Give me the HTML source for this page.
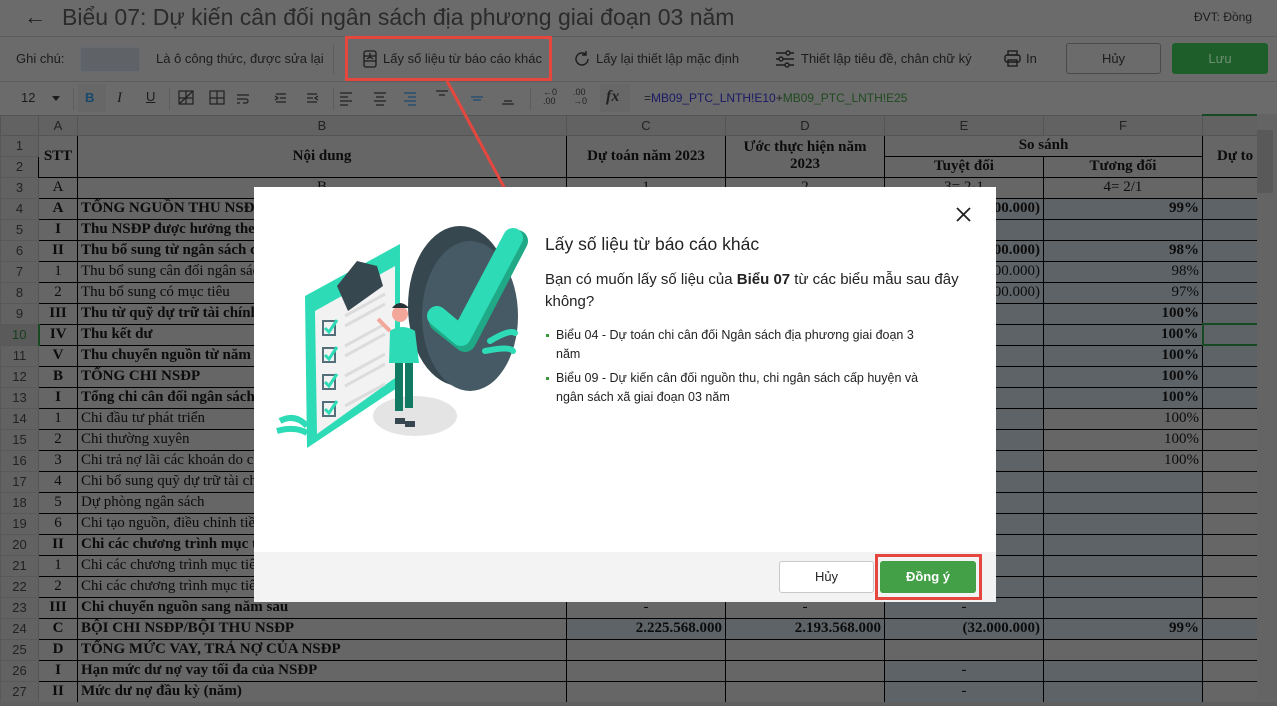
<!DOCTYPE html>
<html><head><meta charset="utf-8">
<style>
*{margin:0;padding:0;box-sizing:border-box}
body{width:1277px;height:706px;overflow:hidden;background:#6b6b6b;font-family:"Liberation Sans",sans-serif;position:relative;color:#111}
.abs{position:absolute}
.tb{font-size:13px;color:#1c1c1c;white-space:nowrap}
table{position:absolute;left:0;top:114px;border-collapse:collapse;table-layout:fixed;font-family:"Liberation Serif",serif;font-size:15px;color:#0c0c0c}
td{border:1px solid #000;height:21px;padding:0 3px;white-space:nowrap;overflow:hidden;background:#666;line-height:19px}
td.rn{background:#626262;color:#222;font-family:"Liberation Sans",sans-serif;font-size:13px;text-align:center;border-color:#595959;border-right:1px solid #555}
tr.ch td{background:#626262;color:#222;font-family:"Liberation Sans",sans-serif;font-size:13px;text-align:center;height:20px;border-color:#555}
td.c{text-align:center}td.r{text-align:right}
.b{font-weight:bold}
td.s{background:#5e6367}
</style></head><body>
<div class="abs" style="left:24px;top:4px;font-size:22px;color:#222">←</div>
<div class="abs" style="left:62px;top:4px;font-size:23px;color:#2b2b2b">Biểu 07: Dự kiến cân đối ngân sách địa phương giai đoạn 03 năm</div>
<div class="abs tb" style="left:1194px;top:10px;font-size:12px">ĐVT: Đồng</div>
<div class="abs" style="left:0;top:36px;width:1277px;height:1px;background:#5d5d5d"></div>
<div class="abs tb" style="left:16px;top:51px">Ghi chú:</div>
<div class="abs" style="left:80px;top:47px;width:60px;height:25px;background:#5f6368;border:1px solid #646a6f"></div>
<div class="abs tb" style="left:156px;top:51px">Là ô công thức, được sửa lại</div>
<div class="abs" style="left:333px;top:44px;width:1px;height:30px;background:#5d5d5d"></div>
<svg class="abs" style="left:362px;top:50px" width="16" height="18" viewBox="0 0 16 18" fill="none" stroke="#1c1c1c" stroke-width="1.3"><rect x="2" y="1" width="12" height="16" rx="2"/><path d="M2 6h12M2 11h12M8 3v3M5 9l3 -2 3 2"/></svg>
<div class="abs tb" style="left:383px;top:51px">Lấy số liệu từ báo cáo khác</div>
<svg class="abs" style="left:573px;top:50px" width="18" height="18" viewBox="0 0 18 18" fill="none" stroke="#1c1c1c" stroke-width="1.4"><path d="M15 9a6 6 0 1 1-2-4.5"/><path d="M13 1v4h-4"/></svg>
<div class="abs tb" style="left:596px;top:51px">Lấy lại thiết lập mặc định</div>
<svg class="abs" style="left:775px;top:50px" width="20" height="18" viewBox="0 0 20 18" fill="none" stroke="#1c1c1c" stroke-width="1.4"><path d="M1 3h18M1 9h18M1 15h18"/><circle cx="13" cy="3" r="2" fill="#6b6b6b"/><circle cx="6" cy="9" r="2" fill="#6b6b6b"/><circle cx="12" cy="15" r="2" fill="#6b6b6b"/></svg>
<div class="abs tb" style="left:801px;top:51px">Thiết lập tiêu đề, chân chữ ký</div>
<svg class="abs" style="left:1004px;top:50px" width="17" height="17" viewBox="0 0 17 17" fill="none" stroke="#1c1c1c" stroke-width="1.4"><rect x="4" y="1" width="9" height="4"/><rect x="1" y="5" width="15" height="7" rx="2"/><rect x="4" y="10" width="9" height="6"/></svg>
<div class="abs tb" style="left:1026px;top:51px">In</div>
<div class="abs" style="left:1066px;top:43px;width:95px;height:31px;border:1px solid #4a4a4a;border-radius:3px;background:#6b6b6b;font-size:13px;color:#1c1c1c;text-align:center;line-height:29px">Hủy</div>
<div class="abs" style="left:1172px;top:43px;width:96px;height:31px;border-radius:3px;background:#1e5e2a;font-size:13px;color:#6e8f73;text-align:center;line-height:31px">Lưu</div>
<div class="abs" style="left:0;top:81px;width:1277px;height:1px;background:#5d5d5d"></div>
<div class="abs tb" style="left:21px;top:90px">12</div>
<div class="abs" style="left:52px;top:96px;border-left:4px solid transparent;border-right:4px solid transparent;border-top:5px solid #1c1c1c"></div>
<div class="abs" style="left:73px;top:88px;width:1px;height:22px;background:#5d5d5d"></div>
<div class="abs" style="left:78px;top:84px;width:28px;height:28px;background:#676767"></div>
<div class="abs tb b" style="left:85px;top:90px;color:#17486e">B</div>
<div class="abs tb" style="left:117px;top:90px;font-style:italic;font-family:'Liberation Serif',serif;font-size:15px">I</div>
<div class="abs tb" style="left:146px;top:89px;text-decoration:underline">U</div>
<div class="abs" style="left:169px;top:88px;width:1px;height:22px;background:#5d5d5d"></div>
<svg class="abs" style="left:177px;top:88px" width="160" height="20" viewBox="0 0 160 20" fill="none" stroke="#222" stroke-width="1.2"><rect x="2" y="3" width="14" height="13"/><path d="M2 16L16 3M2 10h14M9 3v13"/><rect x="33" y="3" width="14" height="13"/><path d="M33 10h14M40 3v13"/><path d="M60 7h12M60 11h9a2 2 0 0 1 0 4h-3M60 15h3"/><path d="M99 6h10M103 10h6M99 14h10M98 8l3 2-3 2"/><path d="M130 6h10M130 10h6M130 14h10M141 8l-3 2 3 2"/></svg>
<div class="abs" style="left:333px;top:88px;width:1px;height:22px;background:#5d5d5d"></div>
<svg class="abs" style="left:338px;top:88px" width="190" height="20" viewBox="0 0 190 20" fill="none" stroke="#222" stroke-width="1.2"><path d="M2 5h12M2 9h8M2 13h12M2 17h8"/><path d="M36 5h12M38 9h8M36 13h12M38 17h8"/><path d="M66 5h12M70 9h8M66 13h12M70 17h8" stroke="#1c4a70"/><path d="M98 3h12M101 7h6"/><path d="M133 9h12M135 12h8" stroke="#1c4a70"/><path d="M164 16h12M166 13h8"/></svg>
<div class="abs" style="left:530px;top:88px;width:1px;height:22px;background:#5d5d5d"></div>
<div class="abs" style="left:543px;top:88px;font-size:9px;line-height:9px;color:#222">←0<br>.00</div>
<div class="abs" style="left:573px;top:88px;font-size:9px;line-height:9px;color:#222">.00<br>→0</div>
<div class="abs" style="left:600px;top:84px;width:30px;height:28px;background:#676767"></div>
<div class="abs" style="left:606px;top:88px;font-family:'Liberation Serif',serif;font-style:italic;font-weight:bold;font-size:16px;color:#222">fx</div>
<div class="abs" style="left:644px;top:91px;font-size:12px;color:#222">=<span style="color:#1a1a66">MB09_PTC_LNTH!E10</span>+<span style="color:#1f4a1f">MB09_PTC_LNTH!E25</span></div>
<table>
<colgroup><col style="width:38px"><col style="width:39px"><col style="width:489px"><col style="width:159px"><col style="width:159px"><col style="width:159px"><col style="width:159px"><col style="width:55px"></colgroup>
<tr class="ch"><td></td><td>A</td><td>B</td><td>C</td><td>D</td><td>E</td><td>F</td><td style="border-top:2px solid #174a22"></td></tr>
<tr><td class="rn">1</td><td class="c b" rowspan="2">STT</td><td class="c b" rowspan="2">Nội dung</td><td class="c b" rowspan="2">Dự toán năm 2023</td><td class="c b" rowspan="2" style="line-height:17px">Ước thực hiện năm<br>2023</td><td class="c b" colspan="2">So sánh</td><td class="b" rowspan="2" style="padding-left:14px">Dự to</td></tr>
<tr><td class="rn">2</td><td class="c b">Tuyệt đối</td><td class="c b">Tương đối</td></tr>
<tr><td class="rn">3</td><td class="c">A</td><td class="c">B</td><td class="c">1</td><td class="c">2</td><td class="c">3= 2-1</td><td class="c">4= 2/1</td><td></td></tr>
<tr><td class="rn">4</td><td class="c b">A</td><td class="b">TỔNG NGUỒN THU NSĐP</td><td class="s"></td><td class="s"></td><td class="r b s">(32.000.000)</td><td class="r b s">99%</td><td class="s"></td></tr>
<tr><td class="rn">5</td><td class="c b">I</td><td class="b">Thu NSĐP được hưởng theo phân cấp</td><td></td><td></td><td class="c s">-</td><td class="s"></td><td class="s"></td></tr>
<tr><td class="rn">6</td><td class="c b">II</td><td class="b">Thu bổ sung từ ngân sách cấp trên</td><td class="s"></td><td class="s"></td><td class="r b s">(32.000.000)</td><td class="r b s">98%</td><td class="s"></td></tr>
<tr><td class="rn">7</td><td class="c">1</td><td>Thu bổ sung cân đối ngân sách</td><td></td><td></td><td class="r s">(32.000.000)</td><td class="r s">98%</td><td class="s"></td></tr>
<tr><td class="rn">8</td><td class="c">2</td><td>Thu bổ sung có mục tiêu</td><td></td><td></td><td class="r s">(32.000.000)</td><td class="r s">97%</td><td class="s"></td></tr>
<tr><td class="rn">9</td><td class="c b">III</td><td class="b">Thu từ quỹ dự trữ tài chính</td><td></td><td></td><td class="c s">-</td><td class="r b s">100%</td><td class="s"></td></tr>
<tr><td class="rn" style="background:#5a5a5a;color:#17401f;border-right:2px solid #174a22">10</td><td class="c b">IV</td><td class="b">Thu kết dư</td><td></td><td></td><td class="c s">-</td><td class="r b s">100%</td><td class="s" style="border:2px solid #174a22"></td></tr>
<tr><td class="rn">11</td><td class="c b">V</td><td class="b">Thu chuyển nguồn từ năm trước chuyển sang</td><td></td><td></td><td class="c s">-</td><td class="r b s">100%</td><td class="s"></td></tr>
<tr><td class="rn">12</td><td class="c b">B</td><td class="b">TỔNG CHI NSĐP</td><td></td><td></td><td class="c s">-</td><td class="r b s">100%</td><td class="s"></td></tr>
<tr><td class="rn">13</td><td class="c b">I</td><td class="b">Tổng chi cân đối ngân sách</td><td></td><td></td><td class="c s">-</td><td class="r b s">100%</td><td class="s"></td></tr>
<tr><td class="rn">14</td><td class="c">1</td><td>Chi đầu tư phát triển</td><td></td><td></td><td class="c s">-</td><td class="r">100%</td><td></td></tr>
<tr><td class="rn">15</td><td class="c">2</td><td>Chi thường xuyên</td><td></td><td></td><td class="c s">-</td><td class="r">100%</td><td></td></tr>
<tr><td class="rn">16</td><td class="c">3</td><td>Chi trả nợ lãi các khoản do chính quyền địa phương vay</td><td></td><td></td><td class="c s">-</td><td class="r">100%</td><td></td></tr>
<tr><td class="rn">17</td><td class="c">4</td><td>Chi bổ sung quỹ dự trữ tài chính</td><td></td><td></td><td class="c s">-</td><td class="s"></td><td></td></tr>
<tr><td class="rn">18</td><td class="c">5</td><td>Dự phòng ngân sách</td><td></td><td></td><td class="c s">-</td><td class="s"></td><td></td></tr>
<tr><td class="rn">19</td><td class="c">6</td><td>Chi tạo nguồn, điều chỉnh tiền lương</td><td></td><td></td><td class="c s">-</td><td class="s"></td><td></td></tr>
<tr><td class="rn">20</td><td class="c b">II</td><td class="b">Chi các chương trình mục tiêu</td><td></td><td></td><td class="c s">-</td><td class="s"></td><td></td></tr>
<tr><td class="rn">21</td><td class="c">1</td><td>Chi các chương trình mục tiêu quốc gia</td><td></td><td></td><td class="c s">-</td><td class="s"></td><td></td></tr>
<tr><td class="rn">22</td><td class="c">2</td><td>Chi các chương trình mục tiêu, nhiệm vụ</td><td></td><td></td><td class="c s">-</td><td class="s"></td><td></td></tr>
<tr><td class="rn">23</td><td class="c b">III</td><td class="b">Chi chuyển nguồn sang năm sau</td><td class="c">-</td><td class="c">-</td><td class="c s">-</td><td class="s"></td><td></td></tr>
<tr><td class="rn">24</td><td class="c b">C</td><td class="b">BỘI CHI NSĐP/BỘI THU NSĐP</td><td class="r b s">2.225.568.000</td><td class="r b s">2.193.568.000</td><td class="r b s">(32.000.000)</td><td class="r b s">99%</td><td class="s"></td></tr>
<tr><td class="rn">25</td><td class="c b">D</td><td class="b">TỔNG MỨC VAY, TRẢ NỢ CỦA NSĐP</td><td></td><td></td><td></td><td></td><td></td></tr>
<tr><td class="rn">26</td><td class="c b">I</td><td class="b">Hạn mức dư nợ vay tối đa của NSĐP</td><td></td><td></td><td class="c s">-</td><td class="s"></td><td></td></tr>
<tr><td class="rn">27</td><td class="c b">II</td><td class="b">Mức dư nợ đầu kỳ (năm)</td><td></td><td></td><td class="c s">-</td><td class="s"></td><td></td></tr>
</table>
<div class="abs" style="left:1257px;top:114px;width:20px;height:592px;background:#646464"></div>
<div class="abs" style="left:1257px;top:130px;width:16px;height:63px;background:#595959"></div>
<div class="abs" style="left:0;top:702px;width:1277px;height:4px;background:#5f5f5f"></div>
<div class="abs" style="left:345px;top:36px;width:207px;height:45px;border:3px solid #e5473f"></div>
<svg class="abs" style="left:0;top:0" width="1277" height="706"><path d="M447 81L512 202" stroke="#e5473f" stroke-width="3"/><path d="M503 199L517 212 517 193" fill="none" stroke="#e5473f" stroke-width="3"/></svg>
<div class="abs" style="left:254px;top:187px;width:742px;height:415px;background:#fff"></div>
<div class="abs" style="left:254px;top:552px;width:742px;height:50px;background:#f3f3f3"></div>
<svg class="abs" style="left:255px;top:186px" width="290" height="270" viewBox="0 0 290 270">
<ellipse cx="160" cy="230" rx="42" ry="20" fill="#e4e4e4"/>
<ellipse cx="205" cy="120" rx="52" ry="80" fill="#37474f"/>
<ellipse cx="215" cy="130" rx="48" ry="75" fill="#455a64"/>
<path d="M262 55L210 155 185 135" fill="none" stroke="#1fa987" stroke-width="22" stroke-linecap="round" stroke-linejoin="round"/>
<path d="M258 52L206 150 182 130" fill="none" stroke="#2ddbb6" stroke-width="20" stroke-linecap="round" stroke-linejoin="round"/>
<path d="M235 155q20-12 25-8M230 165q25-5 28 0" stroke="#2ddbb6" stroke-width="6" fill="none" stroke-linecap="round"/>
<path d="M50 110L145 58 145 200 52 262Z" fill="#2ddbb6"/>
<path d="M60 125L140 80 140 192 62 248Z" fill="#f2f2f2"/>
<path d="M82 100l20-25 20 5 6 20-35 25Z" fill="#37474f"/>
<g stroke="#dcdcdc" stroke-width="3"><path d="M90 130l40-22M90 140l40-22M90 160l40-22M90 170l40-22M90 190l40-22M90 200l40-22M90 220l40-22"/></g>
<g fill="none" stroke="#546e7a" stroke-width="2"><rect x="68" y="135" width="12" height="14"/><rect x="68" y="162" width="12" height="14"/><rect x="68" y="189" width="12" height="14"/><rect x="68" y="216" width="12" height="14"/></g>
<g fill="none" stroke="#2ddbb6" stroke-width="3"><path d="M70 142l4 4 8-12M70 169l4 4 8-12M70 196l4 4 8-12M70 223l4 4 8-12"/></g>
<path d="M25 235q15-8 27 5M22 245q18-5 30 2" stroke="#2ddbb6" stroke-width="6" fill="none"/>
<path d="M140 170v55h8v-55zM150 170v52h8v-52z" fill="#127a62"/>
<path d="M135 145q12-8 25 0l4 32h-30z" fill="#2ddbb6"/>
<circle cx="145" cy="128" r="8" fill="#f2a79a"/>
<path d="M137 122q8-10 17 0" fill="#263238"/>
<path d="M135 145l-12-12" stroke="#f2a79a" stroke-width="4"/>
<path d="M140 232h10v6h-10zM150 235h10v6h-10z" fill="#37474f"/>
</svg>
<div class="abs" style="left:545px;top:234px;font-size:17.5px;color:#222">Lấy số liệu từ báo cáo khác</div>
<div class="abs" style="left:545px;top:269px;width:420px;font-size:15px;line-height:22px;color:#222">Bạn có muốn lấy số liệu của <b>Biểu 07</b> từ các biểu mẫu sau đây không?</div>
<div class="abs" style="left:546px;top:326px;width:385px;font-size:12.5px;line-height:19px;color:#222;padding-left:10px"><span class="abs" style="left:0;top:8px;width:3px;height:3px;background:#3a9a3a"></span>Biểu 04 - Dự toán chi cân đối Ngân sách địa phương giai đoạn 3 năm</div>
<div class="abs" style="left:546px;top:369px;width:385px;font-size:12.5px;line-height:19px;color:#222;padding-left:10px"><span class="abs" style="left:0;top:8px;width:3px;height:3px;background:#3a9a3a"></span>Biểu 09 - Dự kiến cân đối nguồn thu, chi ngân sách cấp huyện và ngân sách xã giai đoạn 03 năm</div>
<svg class="abs" style="left:956px;top:207px" width="15" height="15" viewBox="0 0 15 15"><path d="M1 1L14 14M14 1L1 14" stroke="#222" stroke-width="1.8"/></svg>
<div class="abs" style="left:779px;top:561px;width:95px;height:32px;border:1px solid #c8c8c8;border-radius:3px;background:#fff;font-size:13px;color:#222;text-align:center;line-height:30px">Hủy</div>
<div class="abs" style="left:880px;top:561px;width:96px;height:32px;border-radius:3px;background:#43a047;font-size:13px;color:#fff;font-weight:bold;text-align:center;line-height:32px">Đồng ý</div>
<div class="abs" style="left:875px;top:554px;width:107px;height:46px;border:3px solid #e5473f"></div>
</body></html>
